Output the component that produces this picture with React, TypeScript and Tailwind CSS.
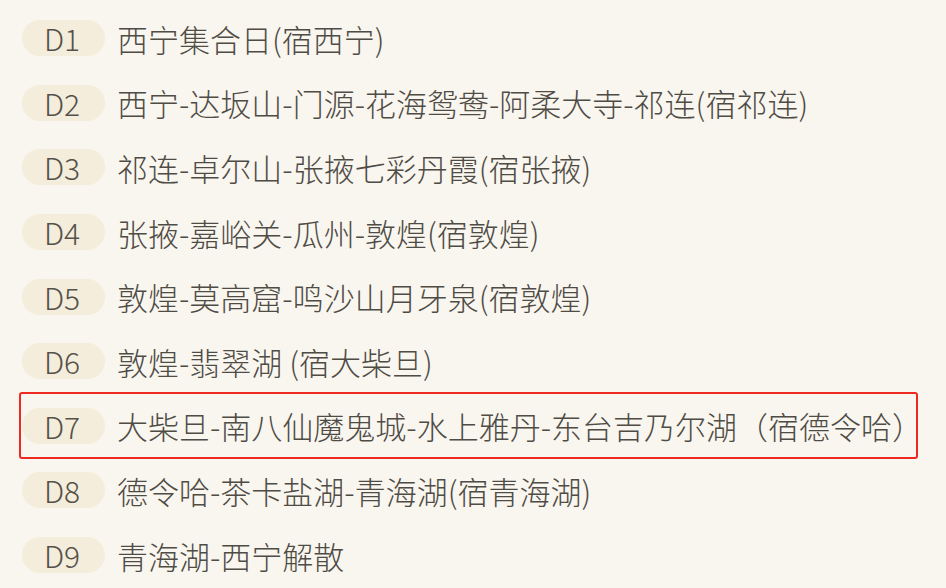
const days = [
  { d: "D1", text: "西宁集合日(宿西宁)" },
  { d: "D2", text: "西宁-达坂山-门源-花海鸳鸯-阿柔大寺-祁连(宿祁连)" },
  { d: "D3", text: "祁连-卓尔山-张掖七彩丹霞(宿张掖)" },
  { d: "D4", text: "张掖-嘉峪关-瓜州-敦煌(宿敦煌)" },
  { d: "D5", text: "敦煌-莫高窟-鸣沙山月牙泉(宿敦煌)" },
  { d: "D6", text: "敦煌-翡翠湖 (宿大柴旦)" },
  { d: "D7", text: "大柴旦-南八仙魔鬼城-水上雅丹-东台吉乃尔湖（宿德令哈）", marked: true },
  { d: "D8", text: "德令哈-茶卡盐湖-青海湖(宿青海湖)" },
  { d: "D9", text: "青海湖-西宁解散" },
];

export default function App() {
  return (
    <div
      className="flex h-[588px] w-[946px] flex-col overflow-hidden bg-[#f9f6ef] pt-[6px] text-[#4f4b45]"
      style={{ fontFamily: '"Noto Sans CJK SC", "Noto Sans", sans-serif' }}
    >
      {days.map((day) => (
        <div key={day.d} className="relative ml-[22px] flex h-[64.6px] items-center">
          {day.marked && (
            <div className="pointer-events-none absolute -top-[2px] -bottom-[1px] left-[-3px] w-[899px] rounded-[3px] border-2 border-[#ec2a22]" />
          )}
          <span className="flex h-[36px] w-[83px] items-center justify-center rounded-full bg-[#f4eddb] pr-[3px] text-[30px] font-light leading-none text-[#55514a]">
            {day.d}
          </span>
          <span className="ml-[12px] text-[31px] font-light leading-none">{day.text}</span>
        </div>
      ))}
    </div>
  );
}
